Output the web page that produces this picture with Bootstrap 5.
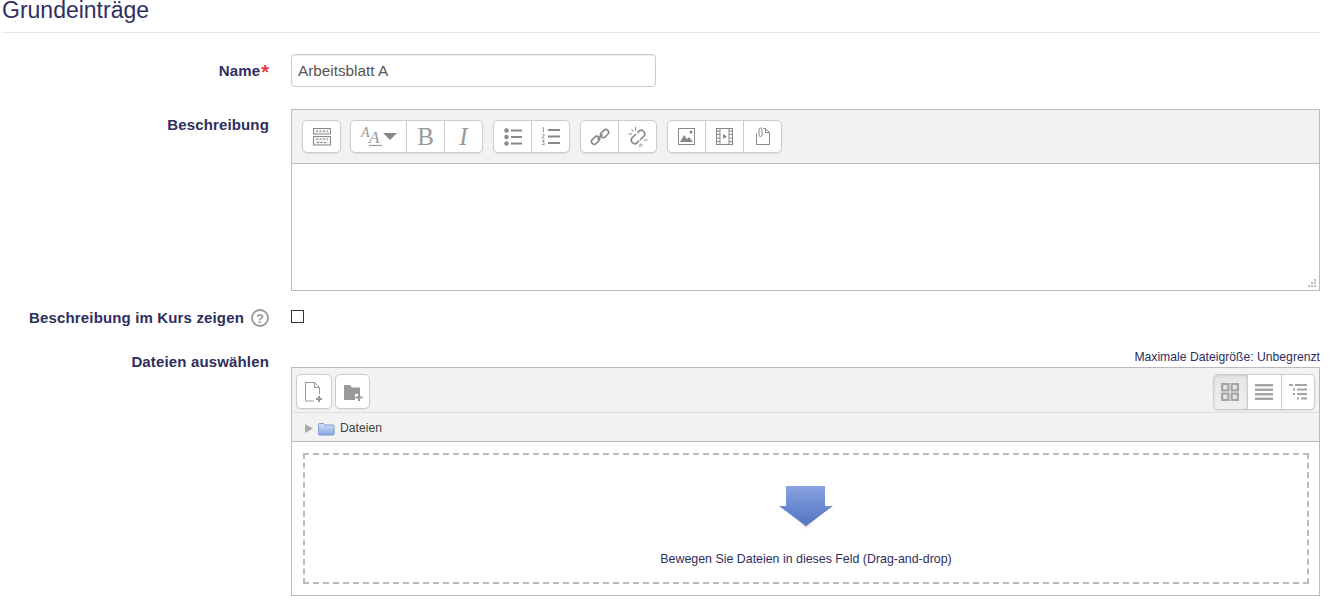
<!DOCTYPE html>
<html lang="de">
<head>
<meta charset="utf-8">
<title>Grundeinträge</title>
<link href="https://cdn.jsdelivr.net/npm/bootstrap@5.3.0/dist/css/bootstrap.min.css" rel="stylesheet">
<style>
html,body{height:605px;overflow:hidden;background:#fff}
body{font-family:"Liberation Sans",Arial,sans-serif;font-size:14px;color:#2e2e5e}
.sheet{width:1320px;padding-left:2px}
.sect-head{font-size:23px;line-height:20px;font-weight:400;color:#2f2f62;margin:0 0 21px;padding:0;border-bottom:1px solid #e8e8e8;height:33px}
.frow{display:flex}
.flabel{width:267px;flex:none;text-align:right;font-weight:700;font-size:15px;line-height:21px;color:#2e2e5e;letter-spacing:.15px}
.flabel i{font-style:normal;color:#ee3a3a;font-size:20px;line-height:0;vertical-align:-3px;margin-left:1px;letter-spacing:0}
.lab-name{padding-top:6px}
.lab-desc{padding-top:27px}
.lab-show{padding-top:2px}
.lab-files{padding-top:8px}
.fctl{margin-left:22px;flex:1;min-width:0}
.name-input{width:365px;height:33px;border:1px solid #ccc;border-radius:4px;padding:0 6px;font-size:15.3px;line-height:32px;color:#555;box-shadow:inset 0 1px 1px rgba(0,0,0,.075)}
.editor{height:182px;border:1px solid #bbb;margin-top:22px}
.ed-tools{height:54px;background:#f2f2f2;border-bottom:1px solid #bbb;padding:10px 0 0 10px;gap:10px}
.seg{display:flex;height:33px;background:#fff;border:1px solid #ccc;border-radius:5px;box-shadow:0 1px 1px rgba(0,0,0,.08)}
.seg>span{display:flex;align-items:center;justify-content:center;height:100%;border-left:1px solid #ccc;width:38px}
.seg>span:first-child{border-left:0;width:37px}
.seg>span.seg-wide{width:55px}
.seg-solo{margin-right:-1px}
.seg svg{display:block}
.ed-letter{font-family:"Liberation Serif",serif;font-size:25px;color:#999;line-height:1}
.ed-grip{position:absolute;right:2px;bottom:2px}
.ed-body{position:relative;height:126px}
.help-ic{margin-left:7px;vertical-align:-4px}
.chk{display:block;width:13px;height:13px;border:1px solid #333;background:#fff;margin-top:5px}
.max-note{font-size:12.2px;text-align:right;line-height:14px;color:#2e2e5e;margin-top:7px;height:14px;white-space:nowrap}
.fm{height:229px;border:1px solid #bbb;margin-top:3px}
.fm-tools{height:45px;background:#f2f2f2;border-bottom:1px solid #ddd;padding:6px 4px 0 4px}
.fm-left{gap:3px}
.fm-btn{display:flex;align-items:center;justify-content:center;width:36px;height:35px;background:#fff;border:1px solid #ccc;border-radius:5px;box-shadow:0 1px 1px rgba(0,0,0,.06)}
.fm-btn+.fm-btn{width:35px}
.view-seg{height:36px}
.view-seg>span,.view-seg>span:first-child{width:33.5px}
.view-seg>span.on{background:linear-gradient(#e6e6e6,#f0f0f0);border-radius:4px 0 0 4px;box-shadow:inset 0 1px 3px rgba(0,0,0,.12)}
.fm-path{height:29px;background:#f2f2f2;border-bottom:1px solid #bbb;padding:3px 0 0 13px;font-size:12.2px;color:#444;gap:5px}
.fm-drop{height:153px;padding:11px 10px 0 11px}
.drop-zone{height:131px;border:2px dashed #bbb;padding-top:30px;text-align:center;font-size:12.4px;line-height:18px;color:#2e2e5e}
.drop-zone svg{display:block;margin:0 auto 21px}
</style>
</head>
<body>
<div class="sheet">
  <h3 class="sect-head">Grundeinträge</h3>

  <div class="frow">
    <div class="flabel lab-name">Name<i>*</i></div>
    <div class="fctl"><div class="name-input">Arbeitsblatt A</div></div>
  </div>

  <div class="frow">
    <div class="flabel lab-desc">Beschreibung</div>
    <div class="fctl">
      <div class="editor">
        <div class="ed-tools d-flex">
          <div class="seg seg-solo"><span>
            <svg width="20" height="20" viewBox="0 0 20 20" fill="none" stroke="#888"><rect x="1.5" y="1.5" width="17" height="5.5" fill="#f4f4f4"/><rect x="1.5" y="9.500" width="17" height="8.500" fill="#f4f4f4"/><path d="M4 4.200h12M4 12h12M5 15.500h10" stroke-dasharray="2 1.500" stroke="#777"/></svg>
          </span></div>
          <div class="seg">
            <span class="seg-wide">
              <svg width="38" height="24" viewBox="0 0 38 24"><text x="1" y="12" font-family="Liberation Serif" font-style="italic" font-size="14" fill="#999">A</text><text x="9" y="18" font-family="Liberation Serif" font-style="italic" font-size="17" fill="#999">A</text><path d="M9 20.500h13" stroke="#999" stroke-width="1.200"/><path d="M23 8h14l-7 7z" fill="#888"/></svg>
            </span>
            <span class="ed-letter">B</span>
            <span class="ed-letter fst-italic">I</span>
          </div>
          <div class="seg">
            <span><svg width="18" height="18" viewBox="0 0 18 18" fill="#888"><circle cx="2.500" cy="2.500" r="2.200"/><circle cx="2.500" cy="9" r="2.200"/><circle cx="2.500" cy="15.500" r="2.200"/><path d="M7 1.500h11v2H7zM7 8h11v2H7zM7 14.500h11v2H7z"/></svg></span>
            <span><svg width="19" height="19" viewBox="0 0 19 19" fill="#888"><path d="M7 2h12v2H7zM7 8.500h12v2H7zM7 15h12v2H7z"/><path d="M1.500 1l1-.5v5M.8 7.700h2.500v.5L.9 11h2.600M.9 13.500h2.400l-1.200 1.500h.7l.5 2.500H.9" fill="none" stroke="#888" stroke-width=".8"/></svg></span>
          </div>
          <div class="seg">
            <span><svg width="20" height="20" viewBox="0 0 20 20" fill="none" stroke="#888" stroke-width="1.600"><rect x="1" y="10.500" width="9" height="5.500" rx="2.700" transform="rotate(-45 5.500 13.200)"/><rect x="10" y="3.800" width="9" height="5.500" rx="2.700" transform="rotate(-45 14.500 6.500)"/><path d="M7.500 12.500l5-5"/></svg></span>
            <span><svg width="22" height="22" viewBox="0 0 22 22" fill="none" stroke="#888" stroke-width="1.600"><path d="M9 8L5 12c-2.500 3 1.500 7.500 5 5l2-2.500M13 14l4-4c2.500-3-1.500-7.500-5-5L10.500 7"/><path d="M8.500 1v3.500M4.500 3l2 2.500M1.500 8h3.500M20.500 14H17M15.500 20l-1.500-2.500M13 21.500V18" stroke-width="1"/></svg></span>
          </div>
          <div class="seg">
            <span><svg width="17" height="17" viewBox="0 0 17 17"><rect x=".5" y=".5" width="16" height="16" fill="#fff" stroke="#888"/><path d="M2 14l4-7 3 4 2-2 4 5z" fill="#888"/><circle cx="13" cy="4" r="1.500" fill="#888"/></svg></span>
            <span><svg width="17" height="17" viewBox="0 0 17 17"><rect x=".5" y=".5" width="16" height="16" fill="#fff" stroke="#888"/><path d="M4 0v17M13 0v17" stroke="#888"/><path d="M0 3h4M0 6.500h4M0 10h4M0 13.500h4M13 3h4M13 6.500h4M13 10h4M13 13.500h4" stroke="#888"/><path d="M7 6l4 2.500L7 11z" fill="#888"/></svg></span>
            <span><svg width="16" height="19" viewBox="0 0 16 19" fill="none" stroke="#888"><path d="M1.500 6.500v11h13V5.500l-4-4H8.500"/><path d="M10.500 1.500v4h4"/><path d="M4 8V2.500a1.500 1.500 0 0 1 3 0V8a1 1 0 0 1-3 0"/></svg></span>
          </div>
        </div>
        <div class="ed-body">
          <svg class="ed-grip" width="10" height="10" viewBox="0 0 10 10" fill="#bbb"><path d="M7 1h2v2H7zM4 4h2v2H4zM7 4h2v2H7zM1 7h2v2H1zM4 7h2v2H4zM7 7h2v2H7z"/></svg>
        </div>
      </div>
    </div>
  </div>

  <div class="frow" style="margin-top:14px;height:28px">
    <div class="flabel lab-show">Beschreibung im Kurs zeigen<svg class="help-ic" width="18" height="18" viewBox="0 0 18 18"><circle cx="9" cy="9" r="8" fill="#fff" stroke="#999" stroke-width="1.800"/><text x="9" y="13.500" text-anchor="middle" font-family="Liberation Sans" font-weight="700" font-size="13" fill="#999">?</text></svg></div>
    <div class="fctl"><span class="chk"></span></div>
  </div>

  <div class="frow" style="margin-top:10px">
    <div class="flabel lab-files">Dateien auswählen</div>
    <div class="fctl">
      <div class="max-note">Maximale Dateigröße: Unbegrenzt</div>
      <div class="fm">
        <div class="fm-tools d-flex justify-content-between">
          <div class="d-flex fm-left">
            <div class="fm-btn"><svg width="20" height="22" viewBox="0 0 20 22" fill="none" stroke="#999"><path d="M10 20H1.500V1.500h9l5 5v7M10.500 1.500v5h5"/><path d="M15 15v6M12 18h6" stroke-width="2"/></svg></div>
            <div class="fm-btn"><svg width="20" height="20" viewBox="0 0 20 20"><path d="M1 3h6l2 2.500h8V12h-5v6H1z" fill="#999"/><path d="M16 12v7M12.500 15.500h7" stroke="#999" stroke-width="2"/></svg></div>
          </div>
          <div class="seg view-seg">
            <span class="on"><svg width="18" height="18" viewBox="0 0 18 18" fill="#e8e8e8" stroke="#a5a5a5" stroke-width="2.200"><rect x="1.100" y="1.100" width="6.300" height="6.300"/><rect x="10.600" y="1.100" width="6.300" height="6.300"/><rect x="1.100" y="10.600" width="6.300" height="6.300"/><rect x="10.600" y="10.600" width="6.300" height="6.300"/></svg></span>
            <span><svg width="20" height="18" viewBox="0 0 20 18" fill="#a5a5a5"><path d="M1 1h18v2.500H1zM1 5.500h18v2.500H1zM1 10h18v2.500H1zM1 14.500h18v2.500H1z"/></svg></span>
            <span><svg width="20" height="18" viewBox="0 0 20 18" fill="#a5a5a5"><path d="M1 1h4v2H1zM7 1h12v2H7zM5 5.500h2v2H5zM9 5.500h10v2H9zM5 10h2v2H5zM9 10h10v2H9zM9 14.500h2v2H9zM13 14.500h6v2h-6z"/></svg></span>
          </div>
        </div>
        <div class="fm-path d-flex align-items-center">
          <svg width="8" height="9" viewBox="0 0 8 9"><path d="M0 0l8 4.500L0 9z" fill="#aaa"/></svg>
          <svg width="17" height="14" viewBox="0 0 17 14"><defs><linearGradient id="fld" x1="0" y1="0" x2="0" y2="1"><stop offset="0" stop-color="#d3e2f8"/><stop offset="1" stop-color="#86a8e0"/></linearGradient></defs><path d="M.5 2.500a1 1 0 0 1 1-1h4l1.500 1.500h8a1 1 0 0 1 1 1v8a1 1 0 0 1-1 1h-14a1 1 0 0 1-1-1z" fill="url(#fld)" stroke="#7c9bcc"/></svg>
          <span>Dateien</span>
        </div>
        <div class="fm-drop">
          <div class="drop-zone">
            <svg width="54" height="44" viewBox="0 0 54 44"><defs><linearGradient id="arw" x1="0" y1="0" x2="0" y2="1"><stop offset="0" stop-color="#8aa3e0"/><stop offset="1" stop-color="#4f72c2"/></linearGradient><filter id="shd" x="-20%" y="-20%" width="140%" height="140%"><feGaussianBlur stdDeviation="1"/></filter></defs><path d="M6 22h42L27 43z" fill="#000" opacity=".2" filter="url(#shd)"/><path d="M7 1h39v20h8L27 41 0 21h7z" fill="url(#arw)"/></svg>
            Bewegen Sie Dateien in dieses Feld (Drag-and-drop)
          </div>
        </div>
      </div>
    </div>
  </div>
</div>
</body>
</html>
